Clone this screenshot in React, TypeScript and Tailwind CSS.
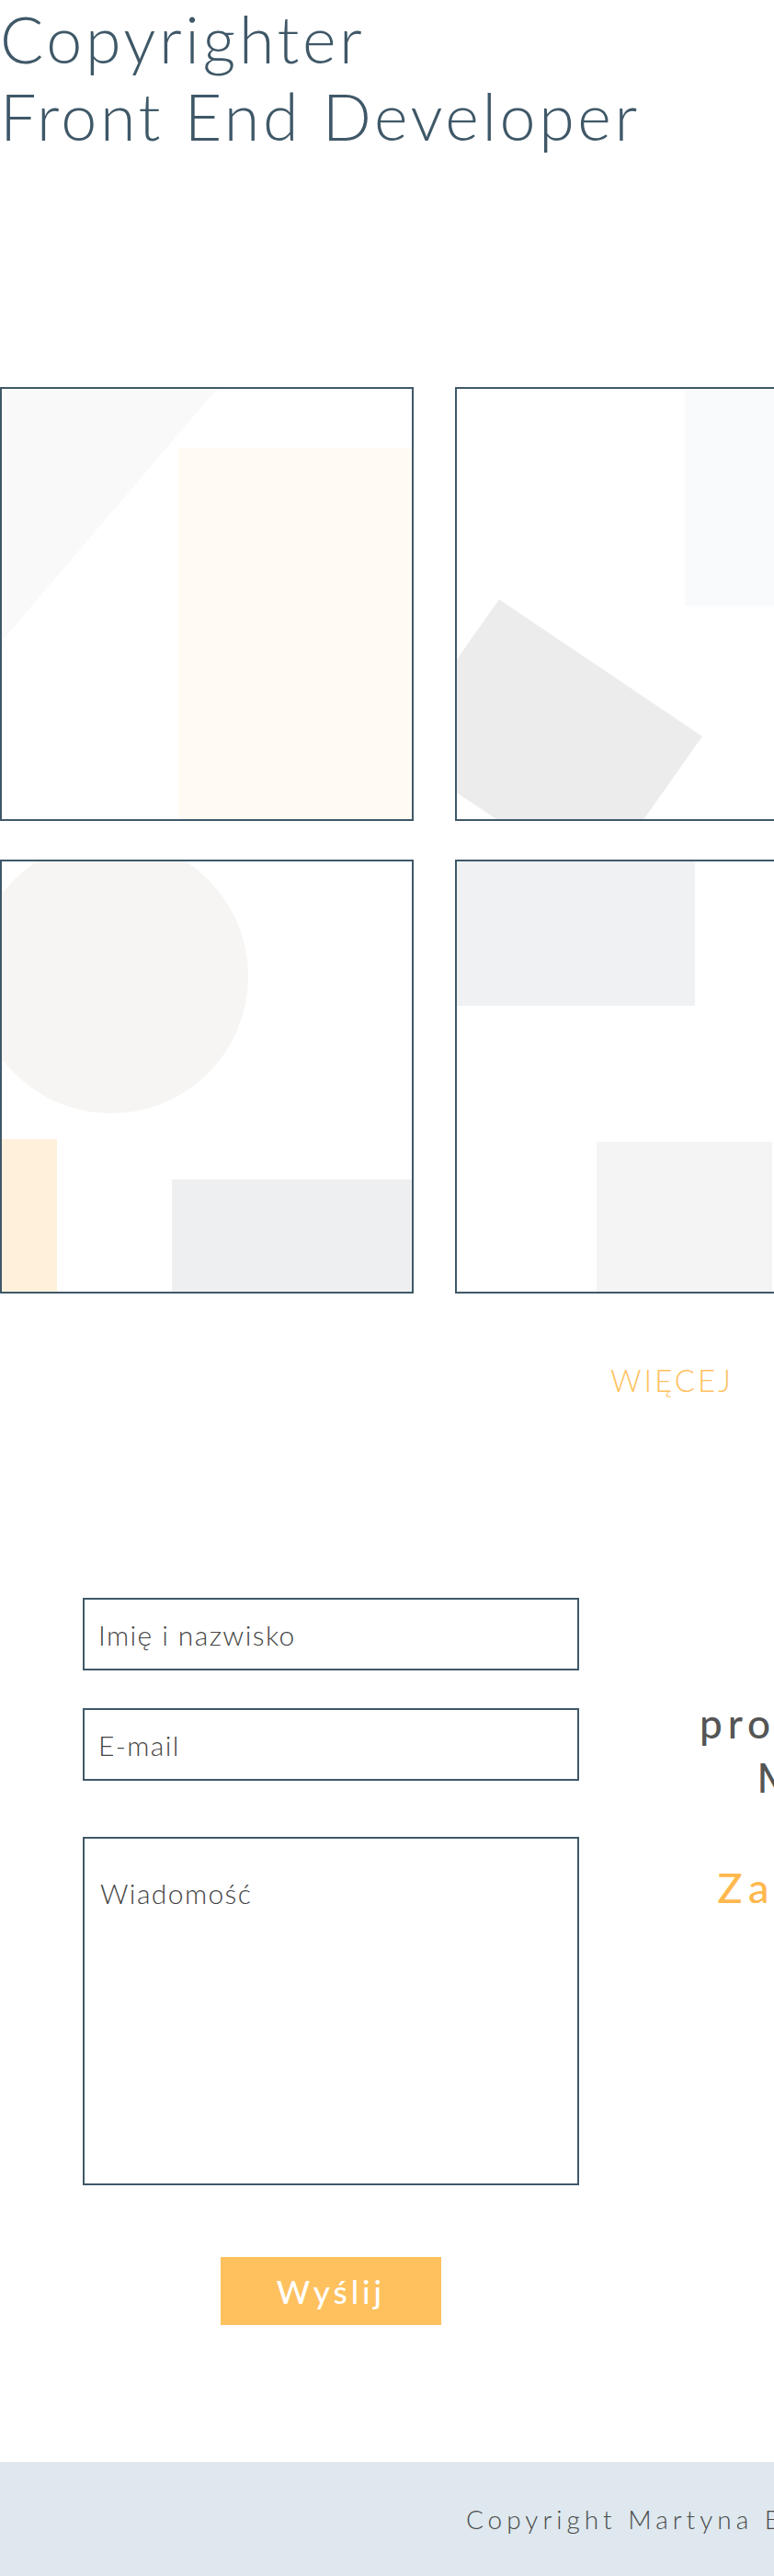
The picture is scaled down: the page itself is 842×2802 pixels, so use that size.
import React from "react"

function Card({ children }: { children: React.ReactNode }) {
  return (
    <div className="h-[472px] w-[450px] border-2 border-[#3f5868] bg-white overflow-hidden">
      <svg viewBox="0 0 446 468" className="block h-full w-full" preserveAspectRatio="none">
        {children}
      </svg>
    </div>
  )
}

const cards = [
  <>
    <polygon points="0,0 234,0 0,274" fill="#f9f9f9" />
    <rect x="192" y="64" width="254" height="404" fill="#fffaf3" />
  </>,
  <>
    <rect x="248" y="0" width="198" height="236" fill="#f9fafb" />
    <polygon points="46,229 267,378 151.6,541.4 -69.4,392.4" fill="#ececec" />
  </>,
  <>
    <circle cx="300" cy="320" r="120" fill="#f7f6f4" />
    <rect x="0" y="0" width="180" height="140" fill="#fff6ea" />
  </>,
  <>
    <circle cx="119" cy="125" r="149" fill="#f6f5f3" />
    <rect x="0" y="302" width="60" height="166" fill="#fff0db" />
    <rect x="185" y="346" width="261" height="122" fill="#eeeff1" />
  </>,
  <>
    <rect x="0" y="0" width="259" height="157" fill="#f0f1f2" />
    <rect x="152" y="305" width="191" height="163" fill="#f4f4f4" />
  </>,
  <>
    <polygon points="446,60 446,400 200,468" fill="#f5f5f5" />
  </>,
]

const field =
  "w-[540px] border-2 border-[#3f5868] text-[30px] font-light tracking-[1.4px] text-[#444] outline-none placeholder:text-[#444]"

export default function App() {
  return (
    <div className="w-full overflow-hidden bg-white" style={{ fontFamily: "Lato, 'Open Sans', sans-serif" }}>
      <div className="w-[1440px]">
        {/* Hero */}
        <h1 className="text-[70px] leading-[84px] font-light tracking-[3.6px] text-[#3f5868]">
          Copyrighter
          <br />
          Front End Developer
        </h1>

        {/* Portfolio */}
        <section className="mt-[253px]">
          <div className="grid grid-cols-[repeat(3,450px)] gap-x-[45px] gap-y-[42px]">
            {cards.map((c, i) => (
              <Card key={i}>{c}</Card>
            ))}
          </div>
          <div className="mt-[74px] flex justify-center pl-[22px]">
            <a href="#" className="text-[33px] leading-[40px] font-light tracking-[3px] text-[#ffc15e]">
              WIĘCEJ
            </a>
          </div>
        </section>

        {/* Contact */}
        <section className="mt-[217px] grid grid-cols-2">
          <form className="flex flex-col items-center" onSubmit={(e) => e.preventDefault()}>
            <input placeholder="Imię i nazwisko" className={`h-[79px] pl-[15px] ${field}`} />
            <input placeholder="E-mail" className={`mt-[41px] h-[79px] pl-[15px] ${field}`} />
            <textarea placeholder="Wiadomość" className={`mt-[61px] h-[379px] resize-none pt-[37px] pl-[17px] ${field}`} />
            <button
              type="submit"
              className="mt-[78px] h-[74px] w-[240px] bg-[#fec15e] text-[35px] font-medium tracking-[4px] text-white"
            >
              Wyślij
            </button>
          </form>

          <div className="flex flex-col items-center pt-[107px] text-center">
            <p className="text-[44px] leading-[59px] font-medium tracking-[6px] text-[#555]">
              projekt do zrealizowania?
              <br />
              Masz jakieś pytania?
            </p>
            <p className="mt-[63px] text-[45px] leading-[54px] font-medium tracking-[6.5px] text-[#ffb84d]">
              Zapraszam do kontaktu
            </p>
          </div>
        </section>

        {/* Footer */}
        <footer className="mt-[149px] flex h-[124px] items-center justify-center bg-[#dee8ee]">
          <p className="text-[28px] font-light tracking-[5px] text-[#4a4a4a]">Copyright Martyna Bielak</p>
        </footer>
      </div>
    </div>
  )
}
